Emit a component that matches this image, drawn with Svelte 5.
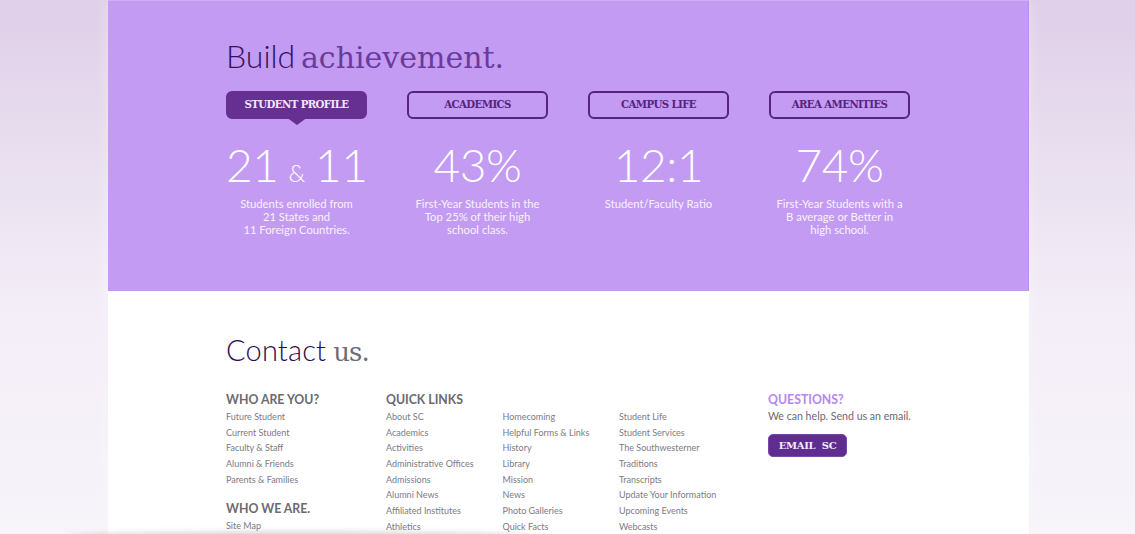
<script lang="ts">
  const tabs = ["Student Profile", "Academics", "Campus Life", "Area Amenities"];
  const stats = [
    { big: "21", amp: true, big2: "11", lines: ["Students enrolled from", "21 States and", "11 Foreign Countries."] },
    { big: "43%", lines: ["First-Year Students in the", "Top 25% of their high", "school class."] },
    { big: "12:1", lines: ["Student/Faculty Ratio"] },
    { big: "74%", lines: ["First-Year Students with a", "B average or Better in", "high school."] },
  ];
  const who = ["Future Student", "Current Student", "Faculty & Staff", "Alumni & Friends", "Parents & Families"];
  const quick = [
    ["About SC", "Academics", "Activities", "Administrative Offices", "Admissions", "Alumni News", "Affiliated Institutes", "Athletics"],
    ["Homecoming", "Helpful Forms & Links", "History", "Library", "Mission", "News", "Photo Galleries", "Quick Facts"],
    ["Student Life", "Student Services", "The Southwesterner", "Traditions", "Transcripts", "Update Your Information", "Upcoming Events", "Webcasts"],
  ];
</script>

<div class="page">
  <main class="column">
    <section class="achieve">
      <h1>Build <span>achievement.</span></h1>
      <div class="tabs">
        {#each tabs as tab, i}
          <button class="tab" class:active={i === 0}>{tab}</button>
        {/each}
      </div>
      <div class="stats">
        {#each stats as stat}
          <div class="stat">
            <div class="big">{stat.big}{#if stat.amp}<span class="amp">&amp;</span>{stat.big2}{/if}</div>
            <p>{#each stat.lines as line}{line}<br />{/each}</p>
          </div>
        {/each}
      </div>
    </section>

    <section class="contact">
      <h2>Contact <span>us.</span></h2>
      <div class="footer-cols">
        <div class="who">
          <h3>Who are you?</h3>
          <ul>
            {#each who as item}<li>{item}</li>{/each}
          </ul>
          <h3 class="second">Who we are.</h3>
          <ul><li>Site Map</li></ul>
        </div>
        <div class="quick">
          <h3>Quick Links</h3>
          <div class="quick-grid">
            {#each quick as col}
              <ul>
                {#each col as item}<li>{item}</li>{/each}
              </ul>
            {/each}
          </div>
        </div>
        <div class="questions">
          <h3>Questions?</h3>
          <p>We can help. Send us an email.</p>
          <button class="email">Email&nbsp; SC</button>
        </div>
      </div>
    </section>
  </main>
  <div class="edge-shadow"></div>
</div>

<style>
  :global(body) {
    margin: 0;
    overflow: hidden;
  }

  .page {
    position: relative;
    height: 534px;
    overflow: hidden;
    background: linear-gradient(180deg, #dfcfe9 0%, #e9dfef 30%, #f3edf7 56%, #f7f4fa 100%);
    font-family: Lato, "Noto Sans", sans-serif;
  }

  .column {
    width: 921px;
    margin-left: 108px;
    height: 534px;
    background: #fff;
    box-shadow: 0 0 14px rgb(255 255 255 / 35%);
  }

  .achieve {
    box-sizing: border-box;
    height: 291px;
    padding: 34px 118px 0;
    background: #c39bf3;
    box-shadow: inset 0 1px 0 #cfaef6, inset -1px 0 0 #bb8ff0;
  }

  h1,
  h2 {
    margin: 0;
    line-height: 44px;
  }

  h1 {
    font-size: 32px;
    font-weight: 300;
    color: #34105e;
  }

  h1 span {
    margin-left: -3px;
    font-family: "DejaVu Serif", serif;
    font-size: 30px;
    font-weight: 400;
    color: #6a3a9c;
  }

  .tabs,
  .stats {
    display: grid;
    grid-template-columns: repeat(4, 141px);
    column-gap: 40px;
  }

  .tabs {
    margin-top: 11px;
  }

  .tab {
    position: relative;
    box-sizing: border-box;
    height: 28px;
    padding: 0 0 2px;
    border: 2px solid #55247f;
    border-radius: 6px;
    background: transparent;
    color: #55247f;
    font-family: "DejaVu Serif", serif;
    font-size: 10.2px;
    font-weight: 700;
    letter-spacing: -0.6px;
    text-transform: uppercase;
  }

  .tab.active {
    background: #662f92;
    border-color: #662f92;
    color: #f1e6fb;
  }

  .tab.active::after {
    content: "";
    position: absolute;
    left: 50%;
    top: 100%;
    margin-left: -11px;
    border: 11px solid transparent;
    border-bottom: 0;
    border-top: 8px solid #662f92;
  }

  .stats {
    margin-top: 18px;
    color: #fff;
    text-align: center;
  }

  .big {
    font-size: 46px;
    font-weight: 300;
    letter-spacing: -0.4px;
    line-height: 56px;
    white-space: nowrap;
  }

  .amp {
    margin: 0 10px;
    font-size: 24px;
    font-weight: 300;
    line-height: 0;
  }

  .stat p {
    margin: 5px -10px 0;
    font-size: 11.25px;
    line-height: 12.8px;
    color: #f8f2fe;
  }

  .contact {
    padding: 37px 0 0 118px;
  }

  h2 {
    color: #2a0a50;
    font-size: 29px;
    font-weight: 300;
    letter-spacing: 0.2px;
  }

  h2 span {
    margin-left: -1px;
    font-family: "DejaVu Serif", serif;
    font-size: 26px;
    font-weight: 400;
    letter-spacing: -1px;
    color: #6f6a77;
  }

  .footer-cols {
    display: flex;
    margin-top: 17px;
  }

  .who {
    flex: none;
    width: 160px;
  }

  .quick {
    flex: none;
    width: 382px;
  }

  .quick-grid {
    display: grid;
    grid-template-columns: repeat(3, 116.5px);
  }

  h3 {
    margin: 0;
    font-size: 12.3px;
    font-weight: 700;
    line-height: 17px;
    color: #6c6971;
    text-transform: uppercase;
  }

  h3.second {
    margin-top: 13px;
  }

  ul {
    margin: 1px 0 0;
    padding: 0;
    list-style: none;
  }

  li {
    font-size: 9px;
    line-height: 15.65px;
    color: #7d7a83;
    white-space: nowrap;
  }

  .questions {
    flex: none;
  }

  .questions h3 {
    color: #b587f0;
  }

  .questions p {
    margin: 1px 0 0;
    font-size: 10.6px;
    line-height: 14px;
    color: #6c6971;
    white-space: nowrap;
  }

  .email {
    display: block;
    box-sizing: border-box;
    width: 79px;
    height: 23px;
    margin-top: 11px;
    padding: 0;
    border: 1px solid #7b45ab;
    border-radius: 5px;
    background: #5f2d90;
    color: #f4ecfb;
    font-family: "DejaVu Serif", serif;
    font-size: 10px;
    font-weight: 700;
    letter-spacing: -0.3px;
    text-transform: uppercase;
  }

  .edge-shadow {
    position: absolute;
    left: 70px;
    bottom: -6px;
    width: 460px;
    height: 6px;
    border-radius: 50%;
    box-shadow: 0 0 6px 2px rgb(0 0 0 / 18%);
  }
</style>
